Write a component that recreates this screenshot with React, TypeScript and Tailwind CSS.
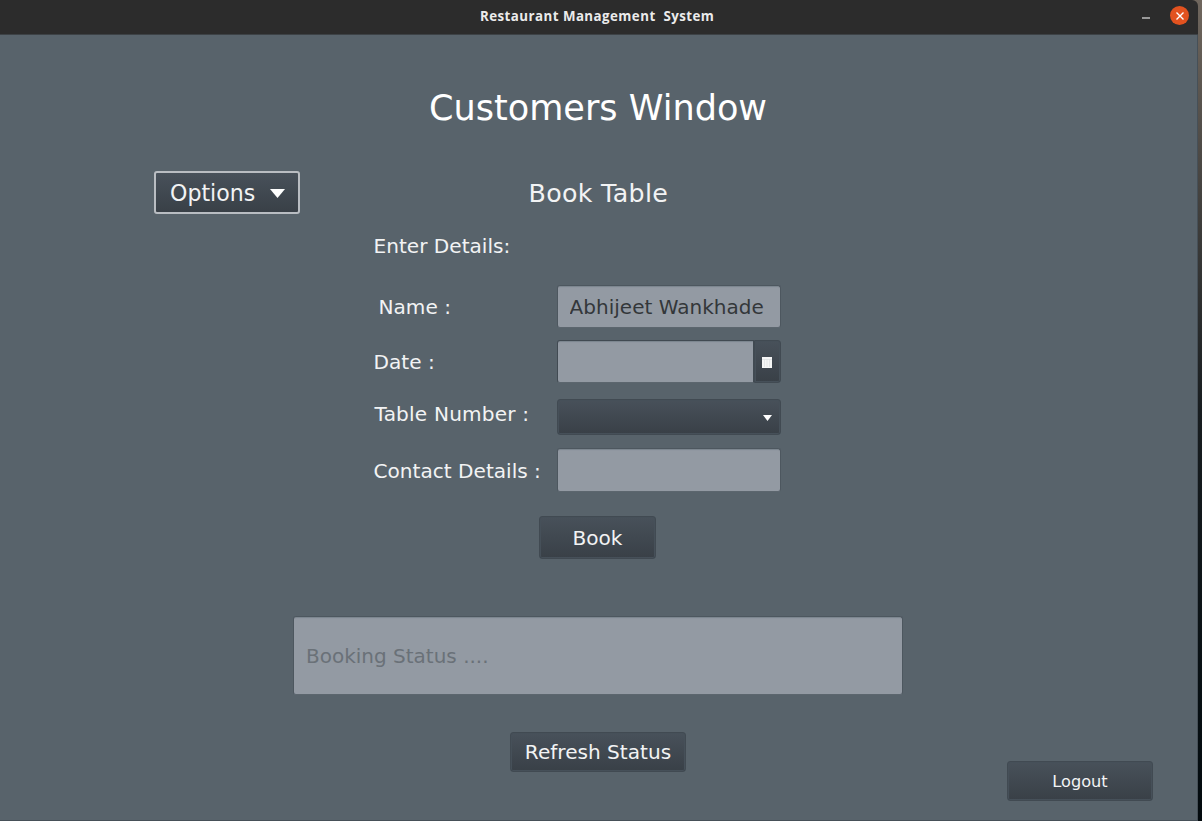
import React from "react";

const buttonFace =
  "flex items-center justify-center rounded-[3px] border border-[#414a52] bg-gradient-to-b from-[#48515a] to-[#394047] text-[#f2f3f4] shadow-[inset_0_0_0_1px_#465059]";
const fieldFace =
  "rounded-[3px] border border-[#4d575f] border-b-[#5c666e] bg-[#939aa3] text-[20px] text-[#33373a] shadow-[inset_0_2px_1px_-1px_#7c858e] outline-none placeholder:text-[#6a7178]";

function TitleBar() {
  return (
    <header className="flex h-[35px] w-full shrink-0 items-center rounded-tr-[6px] border-b border-[#3d4246] bg-[#2c2c2c] pr-[9px]">
      <h1 className="ml-[480px] w-[260px] whitespace-pre font-['Open_Sans',sans-serif] text-[13.3px] font-bold tracking-[0.46px] text-[#ebebeb]">
        Restaurant Management  System
      </h1>
      <button aria-label="Minimize" className="ml-auto mr-[20px] mt-[1px] h-[2px] w-[8px] bg-[#999]" />
      <button aria-label="Close" className="mb-[3px] flex size-[19px] items-center justify-center rounded-full bg-[#e2521f]">
        <svg viewBox="0 0 8 8" className="size-[8px]" stroke="#fff" strokeWidth="1.4">
          <path d="M0.5 0.5L7.5 7.5M7.5 0.5L0.5 7.5" />
        </svg>
      </button>
    </header>
  );
}

export default function App() {
  return (
    <div className="flex h-[821px] w-[1202px] overflow-hidden bg-gradient-to-b from-[#70675e] via-[#181d20] via-50% to-[#030a0e] font-['DejaVu_Sans',sans-serif] leading-none">
      <div className="flex w-[1198px] shrink-0 flex-col">
        <TitleBar />
        <main className="flex h-[786px] flex-col border-b border-r border-[#465058] bg-[#58636b] text-[20.1px] text-[#f2f3f4]">
          <h2 className="mt-[55px] h-[36px] pr-px text-center text-[35.1px] leading-[36px] text-white">Customers Window</h2>

          <div className="mt-[45px] flex h-[43px] items-center pl-[154px]">
            <button className="flex h-[43px] w-[146px] items-center rounded-[3px] border-2 border-[#b9bdc2] bg-gradient-to-b from-[#48515a] to-[#394047] pl-[14px] text-[22.1px]">
              <span className="w-[86px] pt-[2px] text-left">Options</span>
              <svg viewBox="0 0 15 9" className="ml-[14px] mt-px h-[9px] w-[15px]" fill="#fff">
                <path d="M0 0H15L7.5 9Z" />
              </svg>
            </button>
            <h3 className="ml-[228.5px] whitespace-nowrap pt-[2px] text-[25.3px] tracking-[0.32px]">Book Table</h3>
          </div>

          <form className="ml-[372px] flex w-[409px] flex-col" onSubmit={(e) => e.preventDefault()}>
            <p className="mt-[20px] h-[25px] pl-[1.5px] leading-[25px]">Enter Details:</p>
            <div className="mt-[26px] flex h-[43px] items-center">
              <label className="w-[184.5px] shrink-0 pl-[6.5px] pt-[2px]">Name :</label>
              <input aria-label="Name" className={`${fieldFace} h-[43px] w-[224px] px-[12px] pt-px tracking-[0.03px]`} defaultValue="Abhijeet Wankhade" />
            </div>
            <div className="mt-[12px] flex h-[43px] items-center">
              <label className="w-[184.5px] shrink-0 pl-[1.5px] pt-px">Date :</label>
              <div className="flex h-[43px] w-[224px]">
                <input aria-label="Date" className={`${fieldFace} h-[43px] w-[197px] rounded-r-none border-[#414a52] px-[12px]`} />
                <button aria-label="Choose date" className={`${buttonFace} h-[43px] w-[27px] rounded-l-none`}>
                  <svg viewBox="0 0 10 11" className="mt-px h-[11px] w-[10px]">
                    <rect width="10" height="11" fill="#f5f6f6" />
                    <path d="M0 2.5H10M2.5 2.5V10M5 2.5V10M7.5 2.5V10" stroke="#d5d8da" strokeWidth="0.5" />
                  </svg>
                </button>
              </div>
            </div>
            <div className="mt-[16px] flex h-[36px] items-center">
              <label className="w-[184.5px] shrink-0 pb-[6px] pl-[2.5px] tracking-[0.18px]">Table Number :</label>
              <button aria-label="Table number" className={`${buttonFace} h-[36px] w-[224px]`}>
                <svg viewBox="0 0 9 6" className="ml-auto mr-[8px] mt-[2px] h-[6px] w-[9px]" fill="#fff">
                  <path d="M0 0H9L4.5 6Z" />
                </svg>
              </button>
            </div>
            <div className="mt-[13px] flex h-[44px] items-center">
              <label className="w-[184.5px] shrink-0 whitespace-nowrap pl-[1.5px] pt-[2px]">Contact Details :</label>
              <input aria-label="Contact details" className={`${fieldFace} h-[44px] w-[224px] px-[12px]`} />
            </div>
            <button className={`${buttonFace} ml-[167px] mt-[24px] h-[43px] w-[117px] pt-[2px]`}>Book</button>
          </form>

          <input
            aria-label="Booking status"
            placeholder="Booking Status ...."
            className={`${fieldFace} ml-[293px] mt-[57px] h-[79px] w-[610px] pl-[12px] pr-[11px] pt-px`}
          />

          <div className="flex items-start">
            <button className={`${buttonFace} ml-[510px] mt-[37px] h-[40px] w-[176px] pt-px`}>Refresh Status</button>
            <button className={`${buttonFace} ml-[321px] mt-[66px] h-[40px] w-[146px] pt-[3px] text-[16.2px]`}>Logout</button>
          </div>
        </main>
      </div>
    </div>
  );
}
